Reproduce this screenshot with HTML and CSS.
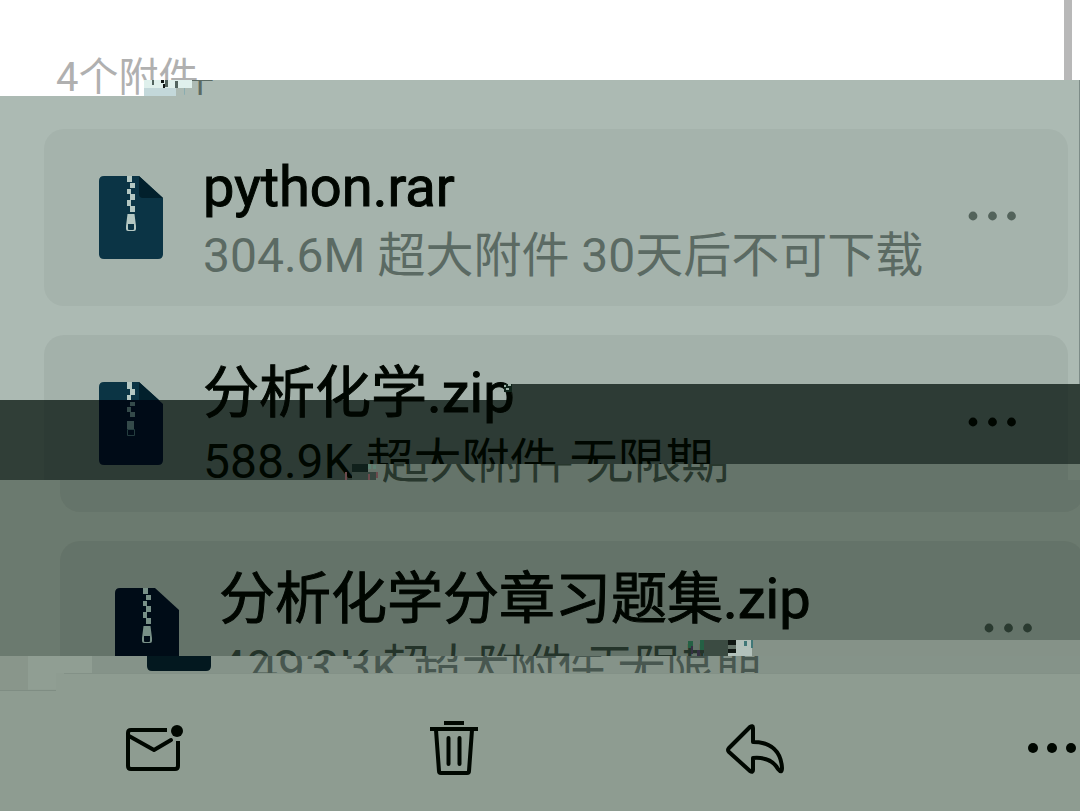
FILE: index.html
```html
<!DOCTYPE html>
<html lang="zh-CN">
<head>
  <meta charset="UTF-8">
  <meta name="viewport" content="width=device-width, initial-scale=1">
  <title>附件</title>
  <link rel="stylesheet" href="styles.css">
</head>
<body>

  <svg class="defs" width="0" height="0" aria-hidden="true">
    <symbol id="zipper" viewBox="0 0 64 83">
      <path d="M28 0h5v6h-5zM31 7h5v5h-5zM28 13h4v5h-4zM31 18h5v6h-5zM28 24h4v6h-4zM31 30h5v6h-5z"/>
      <path fill-rule="evenodd" d="M28.500 38h7l1.500 12v3q0 2-2 2h-6q-2 0-2-2v-3zM29 48v5q0 1 1 1h4q1 0 1-1v-5z"/>
    </symbol>
    <symbol id="dots" viewBox="0 0 48 48">
      <circle cx="5" cy="24" r="4.400"/>
      <circle cx="24.500" cy="24" r="4.400"/>
      <circle cx="43.500" cy="24" r="4.400"/>
    </symbol>
    <linearGradient id="sheet" gradientUnits="userSpaceOnUse" x1="0" y1="0" x2="0" y2="83">
      <stop offset="0.220" stop-color="#0b3444"/>
      <stop offset="0.220" stop-color="#000b17"/>
    </linearGradient>
    <clipPath id="upper"><rect width="64" height="68"/></clipPath>
    <clipPath id="lower"><rect y="68" width="64" height="15"/></clipPath>
  </svg>

  <header class="heading">
    <h1 class="count">4个附件</h1>
    <span class="count count-shift" aria-hidden="true">4个附件</span>
    <div class="scrollbar"></div>
  </header>

  <main class="list">
    <article class="card">
      <svg class="file" viewBox="0 0 64 83">
        <path fill="#0b3445" d="M5 0h35l24 22v56q0 5-5 5H5q-5 0-5-5V5q0-5 5-5z"/>
        <path fill="#02202c" d="M40 0l24 22H44q-4 0-4-4z"/>
        <use href="#zipper" fill="#b5c8c3"/>
      </svg>
      <div class="info">
        <h2>python.rar</h2>
        <p>304.6M 超大附件 30天后不可下载</p>
      </div>
      <button class="more" aria-label="更多"><svg viewBox="0 0 48 48"><use href="#dots"/></svg></button>
    </article>

    <article class="card card-split">
      <svg class="file" viewBox="0 0 64 83">
        <path fill="url(#sheet)" d="M5 0h35l24 22v56q0 5-5 5H5q-5 0-5-5V5q0-5 5-5z"/>
        <path fill="#02202c" d="M40 0l20 18H40z"/>
        <path fill="#b5c8c3" d="M28 0h5v7h-5zM31 7h5v6h-5zM28 13h4v5h-4z"/>
        <path fill="#344a4a" d="M31 20h5v4h-5zM28 25h4v5h-4zM31 30h5v5h-5zM28 39h7v8h-7z"/>
        <path fill="none" stroke="#243d3f" d="M28.500 47.500h7v6h-7z"/>
      </svg>
      <div class="info">
        <h2>分析化学.zip</h2>
        <p class="split">
          <span class="part-top">588.9K 超大附件 无限期</span>
          <span class="part-bottom" aria-hidden="true">588.9K 超大附件 无限期</span>
        </p>
      </div>
      <button class="more" aria-label="更多"><svg viewBox="0 0 48 48"><use href="#dots"/></svg></button>
    </article>

    <article class="card card-shift">
      <svg class="file" viewBox="0 0 64 83">
        <g clip-path="url(#upper)">
          <path fill="#000c17" d="M5 0h35l24 22v61H0V5q0-5 5-5z"/>
          <use href="#zipper" fill="#789087"/>
        </g>
        <g transform="translate(32 0)">
          <path clip-path="url(#lower)" fill="#03181f" d="M0 0h64v78q0 5-5 5H5q-5 0-5-5z"/>
        </g>
      </svg>
      <div class="info">
        <h2>分析化学分章习题集.zip</h2>
        <p class="split">
          <span class="part-top">493.3K 超大附件 无限期</span>
          <span class="part-bottom" aria-hidden="true">493.3K 超大附件 无限期</span>
        </p>
      </div>
      <button class="more" aria-label="更多"><svg viewBox="0 0 48 48"><use href="#dots"/></svg></button>
    </article>
  </main>

  <nav class="toolbar">
    <button aria-label="标为未读">
      <svg viewBox="0 0 60 60" fill="none" stroke="#000700" stroke-width="4" stroke-linecap="round" stroke-linejoin="round">
        <path d="M43 12H7q-3 0-3 3v33q0 3 3 3h44q3 0 3-3V23" stroke-linecap="butt"/>
        <path d="M5 18l25 14 17-10"/>
        <circle cx="53" cy="13" r="6" fill="#000700" stroke="none"/>
      </svg>
    </button>
    <button aria-label="删除">
      <svg viewBox="0 0 60 60" fill="none" stroke="#000700" stroke-width="4" stroke-linejoin="round">
        <path d="M21 5h20M7 11h48"/>
        <path d="M13 12l3 41q0 2 2 2h26q2 0 2-2l3-41"/>
        <path d="M25.500 20v26M36.500 20v26" stroke-linecap="round"/>
      </svg>
    </button>
    <button aria-label="回复">
      <svg viewBox="-4 -2 60 60" fill="none" stroke="#000700" stroke-width="4" stroke-linejoin="round">
        <path d="M28 8q0-3-3-1L4 28q-2 2 0 4l21 19q3 2 3-1V38c12-1 20 2 25 11q4 5 4-1C56 31 46 22 28 22z"/>
      </svg>
    </button>
    <button aria-label="更多操作">
      <svg viewBox="0 0 60 60" fill="#000700">
        <circle cx="13" cy="30" r="5"/>
        <circle cx="32" cy="30" r="5"/>
        <circle cx="51" cy="30" r="5"/>
      </svg>
    </button>
  </nav>

  <!-- broken blocks at the start of each band -->
  <svg class="blocks" aria-hidden="true">
    <path fill="#c3d8da" d="M144 88h32v8h-32z"/>
    <path fill="#dff0ec" d="M144 80h48v8h-48z"/>
    <path fill="#52645f" d="M152 80h2v5h-2zM165 80h3v7h-3zM175 81h3v7h-3z"/>
    <path fill="#101816" d="M161 80h3v3h-3zM163 84h2v4h-2z"/>
    <path fill="#a5b3ab" d="M496 392h8v8h-8z"/>
    <path fill="#10241a" d="M504 384h8v8h-8z"/>
    <path fill="#9fb2a8" d="M504 385h2v2h-2zM508 384h3v2h-3zM506 388h3v2h-3z"/>
    <path fill="#10201b" d="M352 464h16v8h-16z"/>
    <path fill="#36463f" d="M352 472h24v8h-24z"/>
    <path fill="#5d8273" d="M368 464h3v5h-3zM373 465h3v4h-3z"/>
    <path fill="#6b4b4d" d="M345 472h2v8h-2zM368 474h2v6h-2zM376 472h2v6h-2z"/>
    <path fill="#3b4b42" d="M704 640h24v16h-24z"/>
    <path fill="#246044" d="M688 641h5v7h-5zM700 640h4v10h-4z"/>
    <path fill="#353044" d="M691 646h2v8h-2zM697 650h3v6h-3z"/>
    <path fill="#101713" d="M728 640h8v5h-8zM728 649h8v4h-8z"/>
    <path fill="#b3c1bb" d="M736 640h16v16h-16zM728 653h8v3h-8z"/>
    <path fill="#407777" d="M744 641h3v5h-3zM751 640h2v8h-2z"/>
    <path fill="#89968b" d="M0 656h28v34H0z"/>
    <path fill="#909e93" d="M28 656h64v17H28zM28 673h28v16H28z"/>
    <path fill="#8e9c91" d="M56 673h8v18h-8z"/>
    <path fill="#7f8d83" d="M0 690h56v1H0z"/>
  </svg>

</body>
</html>
```
FILE: styles.css
```css
* {
  box-sizing: border-box;
}
body {
  margin: 0;
  height: 100vh;
  display: flex;
  flex-direction: column;
  position: relative;
  overflow: hidden;
  font-family: Roboto, "Noto Sans CJK SC", sans-serif;
  color: #000600;
  background-color: #8e9c91;
  background-repeat: no-repeat;
  /* colour bands, first one is on top */
  background-image:
    linear-gradient(#fff, #fff),
    linear-gradient(#fff, #fff),
    linear-gradient(#7d8c88, #7d8c88),
    linear-gradient(#303e37, #303e37),
    linear-gradient(#acbab3, #acbab3),
    linear-gradient(#303e37, #303e37),
    linear-gradient(#303e37, #303e37),
    linear-gradient(#8e9b90, #8e9b90),
    linear-gradient(#6b7a6f, #6b7a6f);
  background-size:
    100% 80px,
    144px 16px,
    1px 304px,
    100% 16px,
    100% 320px,
    100% 64px,
    352px 16px,
    100% 16px,
    100% 192px;
  background-position:
    0 0,
    0 80px,
    right 80px,
    512px 384px,
    0 80px,
    0 400px,
    0 464px,
    752px 640px,
    0 464px;
}
.defs {
  position: absolute;
}
h1, h2, p {
  margin: 0;
  font-weight: normal;
}
button {
  padding: 0;
  border: 0;
  background: none;
  cursor: pointer;
}
.heading {
  flex: none;
  height: 129px;
  padding: 54px 56px 0;
  position: relative;
}
.count {
  font-size: 40px;
  line-height: 48px;
  color: #b0b0b0;
  clip-path: polygon(0 0, 100% 0, 100% 26px, 88px 26px, 88px 42px, 0 42px);
}
.count-shift {
  position: absolute;
  left: 72px;
  top: 54px;
  color: #5b6a63;
  clip-path: inset(26px 0 6px 112px);
}
.scrollbar {
  position: absolute;
  top: 0;
  right: 8px;
  width: 8px;
  height: 80px;
  background: #b8b8b8;
}
.list {
  flex: 1;
  min-height: 0;
  overflow: hidden;
  display: flex;
  flex-direction: column;
  gap: 29px;
  padding: 0 12px 0 44px;
}
.card {
  flex: none;
  height: 177px;
  display: flex;
  align-items: center;
  padding: 0 52px 0 55px;
  border-radius: 20px;
  background: rgba(0, 20, 10, 0.04);
  position: relative;
}
.file {
  flex: none;
  width: 64px;
  height: 83px;
  overflow: visible;
}
.info {
  flex: 1;
  min-width: 0;
  margin-left: 40px;
  padding-top: 7px;
  white-space: nowrap;
}
.info h2 {
  font-size: 56px;
  line-height: 70px;
  -webkit-text-stroke: 1px currentColor;
}
.info p {
  font-size: 48px;
  line-height: 68px;
  color: #5b6a63;
}
.more {
  width: 48px;
  height: 48px;
  margin-bottom: 4px;
  color: #53635b;
}
.more svg {
  display: block;
  fill: currentColor;
}

/* second card: upper and lower parts are 16px apart */
.card-split {
  background: none;
}
.card-split::before,
.card-split::after {
  content: "";
  position: absolute;
  left: 0;
  right: 0;
  top: 0;
  height: 145px;
  border-radius: 20px 20px 0 0;
  background: rgba(0, 20, 10, 0.05);
  z-index: -1;
}
.card-split::after {
  left: 16px;
  right: -16px;
  top: 145px;
  height: 32px;
  border-radius: 0 0 20px 20px;
}
.card-split .more {
  color: #000600;
}
.split {
  position: relative;
}
.split span {
  display: block;
}
.info .part-bottom {
  position: absolute;
  top: 0;
}
.card-split .part-top {
  color: #000700;
  clip-path: polygon(0 0, 100% 0, 100% 36px, 149px 36px, 149px 52px, 0 52px);
}
.card-split .part-bottom {
  left: 16px;
  color: #28372d;
  clip-path: inset(36px 0 0 164px);
}

.card-shift {
  margin: 0 -16px 0 16px;
  background: rgba(0, 20, 10, 0.06);
}
.card-shift .more {
  color: #2a3a30;
}
.card-shift .part-top {
  color: #24342a;
  clip-path: inset(0 0 46px 0);
}
.card-shift .part-bottom {
  left: 32px;
  color: #485750;
  clip-path: inset(22px 0 0 0);
}

.toolbar {
  flex: none;
  height: 138px;
  display: flex;
  justify-content: space-between;
  padding: 44px 0 0 124px;
  border-top: 1px solid #839187;
  background: #8e9c91;
}
.toolbar button {
  width: 60px;
  height: 60px;
}
.toolbar svg {
  display: block;
  overflow: visible;
}
.blocks {
  position: absolute;
  left: 0;
  top: 0;
  width: 100%;
  height: 100%;
  pointer-events: none;
}
```
